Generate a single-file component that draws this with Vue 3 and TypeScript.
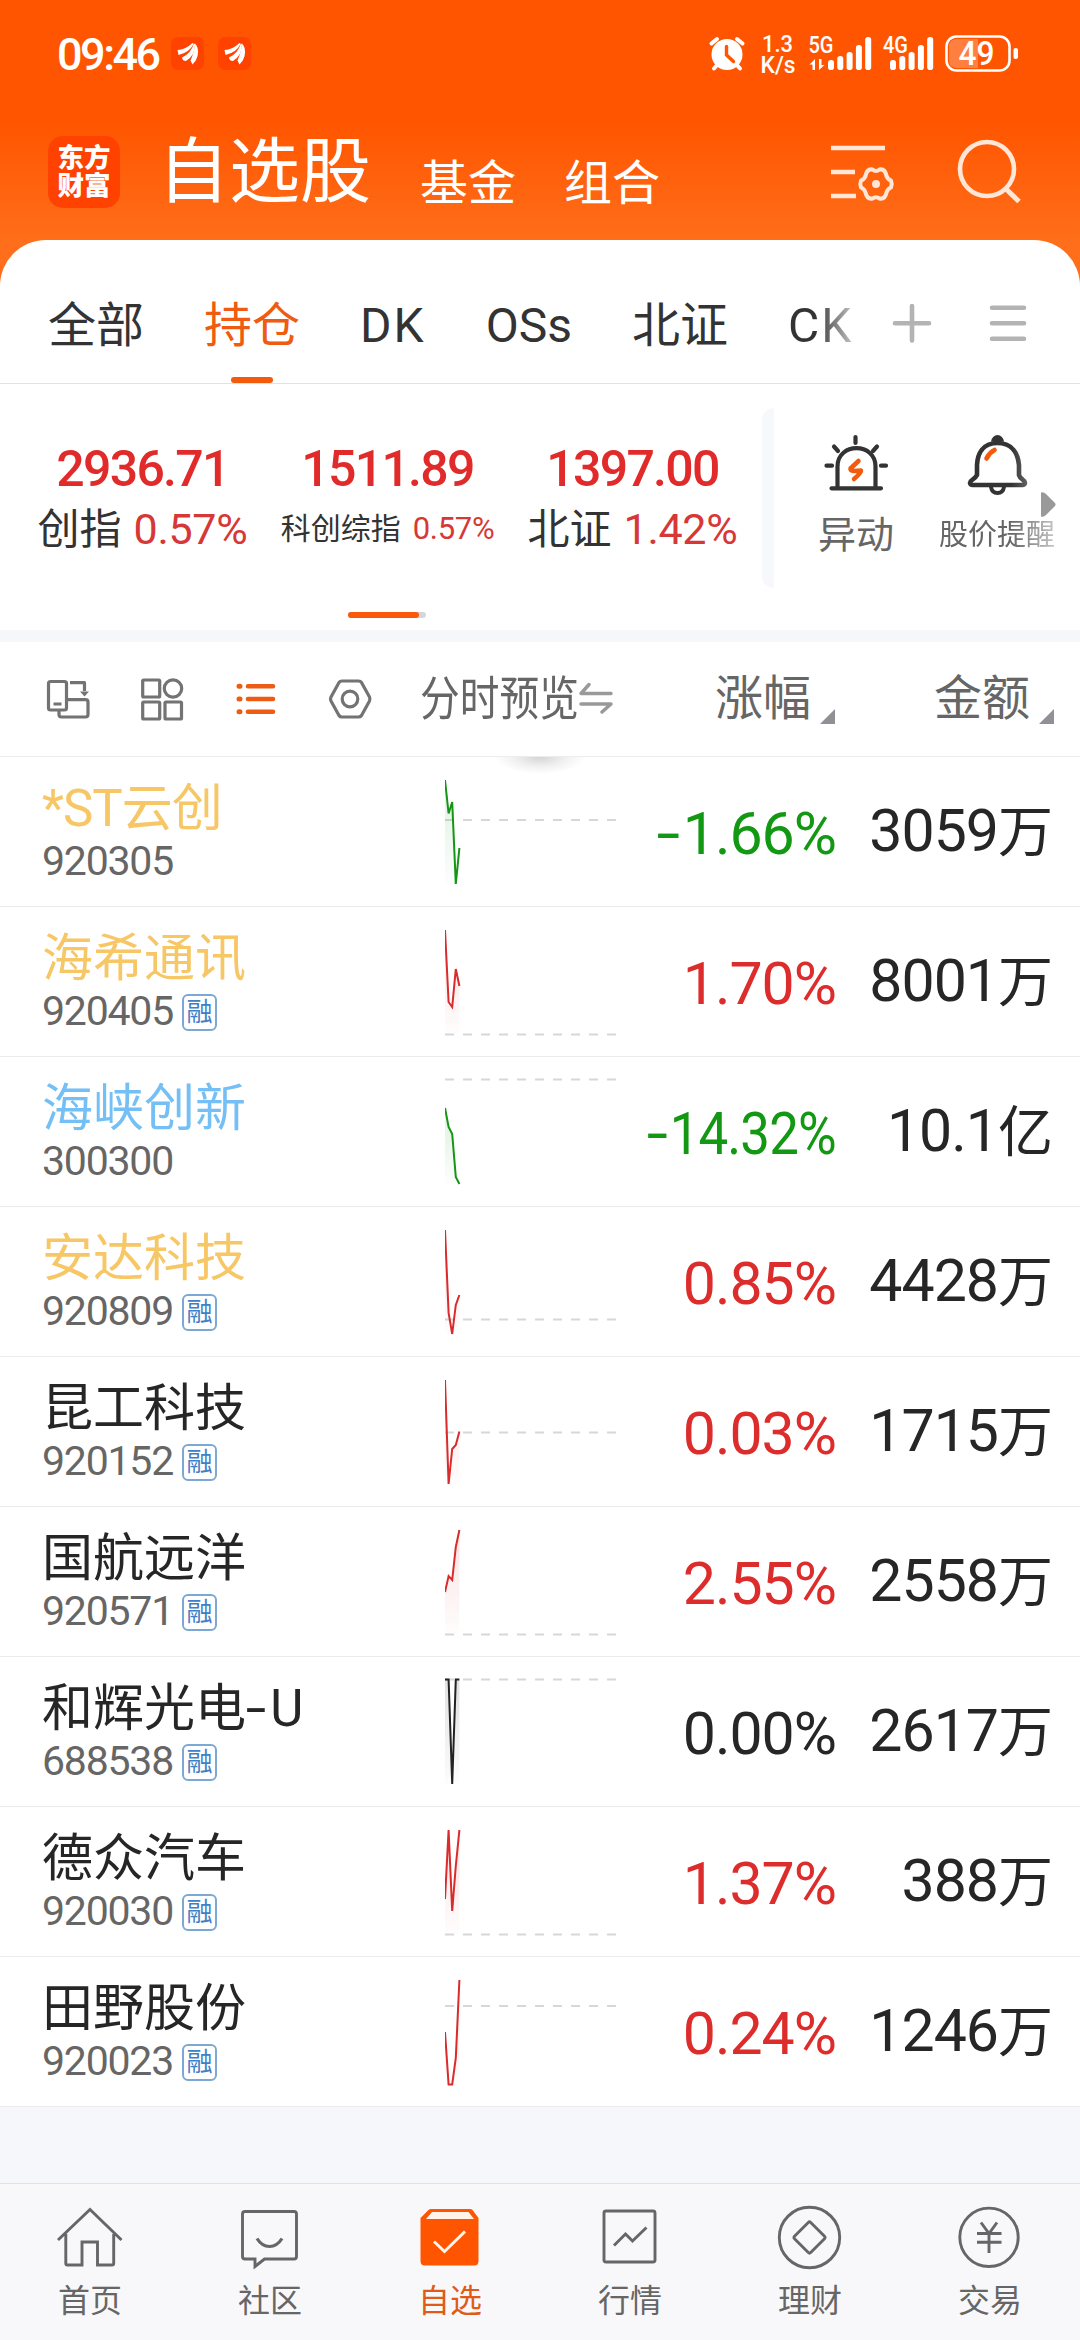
<script setup lang="ts">
type Tone = 'up' | 'down' | 'flat'

interface Stock {
  name: string
  code: string
  margin: boolean
  mark: 'gold' | 'blue' | 'plain'
  change: string
  amount: string
  unit: string
  tone: Tone
  /** y values of the intraday line, one per sample */
  line: number[]
  /** y of the previous close */
  base: number
}

interface MarketIndex {
  value: string
  label: string
  change: string
  small?: boolean
}

const tabs = ['全部', '持仓', 'DK', 'OSs', '北证', 'CK']
const activeTab = '持仓'

const indices: MarketIndex[] = [
  { value: '2936.71', label: '创指', change: '0.57%' },
  { value: '1511.89', label: '科创综指', change: '0.57%', small: true },
  { value: '1397.00', label: '北证', change: '1.42%' },
]

const stocks: Stock[] = [
  { name: '*ST云创', code: '920305', margin: false, mark: 'gold', change: '-1.66%', amount: '3059', unit: '万', tone: 'down', line: [24, 57.5, 46, 128, 92], base: 64 },
  { name: '海希通讯', code: '920405', margin: true, mark: 'gold', change: '1.70%', amount: '8001', unit: '万', tone: 'up', line: [24, 96, 101, 63, 80], base: 128.5 },
  { name: '海峡创新', code: '300300', margin: false, mark: 'blue', change: '-14.32%', amount: '10.1', unit: '亿', tone: 'down', line: [52, 71, 78, 121, 128], base: 23.5 },
  { name: '安达科技', code: '920809', margin: true, mark: 'gold', change: '0.85%', amount: '4428', unit: '万', tone: 'up', line: [24, 107, 128, 99, 89], base: 113.5 },
  { name: '昆工科技', code: '920152', margin: true, mark: 'plain', change: '0.03%', amount: '1715', unit: '万', tone: 'up', line: [24, 128, 93, 89, 75.5], base: 76.5 },
  { name: '国航远洋', code: '920571', margin: true, mark: 'plain', change: '2.55%', amount: '2558', unit: '万', tone: 'up', line: [86, 70, 74, 41, 24], base: 128.5 },
  { name: '和辉光电-U', code: '688538', margin: true, mark: 'plain', change: '0.00%', amount: '2617', unit: '万', tone: 'flat', line: [23.5, 23.5, 128, 23.5, 23.5], base: 23.5 },
  { name: '德众汽车', code: '920030', margin: true, mark: 'plain', change: '1.37%', amount: '388', unit: '万', tone: 'up', line: [93, 24, 105, 60, 24], base: 128.5 },
  { name: '田野股份', code: '920023', margin: true, mark: 'plain', change: '0.24%', amount: '1246', unit: '万', tone: 'up', line: [76, 128.5, 128.5, 102, 24], base: 50 },
]

const colors: Record<Tone, string> = { up: '#d92b2b', down: '#149614', flat: '#222222' }
const bars = [10, 14, 18, 25, 33]

/** Splits a text so that its hyphen can be drawn wider than the font's own. */
function pieces(text: string): string[] {
  return text.split(/(-)/).filter((p) => p !== '')
}

function points(line: number[]): string {
  return line.map((y, i) => `${(i * 3.6).toFixed(1)},${y}`).join(' ')
}

function area(line: number[]): string {
  return `0,128.5 ${points(line)} 14.4,128.5`
}
</script>

<template>
  <div class="app">
    <header class="hero">
      <div class="status">
        <span class="time">09:46</span>
        <svg v-for="n in 2" :key="n" class="mini-logo" viewBox="0 0 33 33">
          <rect width="33" height="33" rx="7" fill="#ff4200" />
          <g fill="#fff">
            <path d="M6.500 13Q14 13 21.500 6L22.500 7Q18.500 15.500 7.500 18Z" />
            <path d="M11 20.500Q20 16.500 22.800 6.500L24 7Q24.500 18 15 24Q11.500 24 11 20.500Z" />
            <path d="M19.500 23.500Q22.500 17 24.500 6.500Q29.500 14.500 24.800 23.500L21.500 27.500Z" />
          </g>
        </svg>
        <svg class="status-icons" viewBox="705 30 320 46">
          <g stroke="#fff" stroke-linecap="round" fill="none">
            <circle cx="727" cy="54.500" r="15.500" fill="#fff" stroke="none" />
            <path d="M711.500 43.500L717 39M742.500 43.500L737 39" stroke-width="4" />
            <path d="M718 64L714 68.500M736 64L740 68.500" stroke-width="4" />
            <path d="M726.500 46.500V55L733.500 61.500" stroke="#ff5500" stroke-width="3.400" />
          </g>
          <g fill="#fff" font-weight="500">
            <text x="762" y="52" font-size="23" textLength="31" lengthAdjust="spacingAndGlyphs">1.3</text>
            <text x="760.500" y="73" font-size="23" textLength="35" lengthAdjust="spacingAndGlyphs">K/s</text>
            <text x="808.500" y="53" font-size="23" textLength="25" lengthAdjust="spacingAndGlyphs">5G</text>
            <text x="883" y="53" font-size="23" textLength="25" lengthAdjust="spacingAndGlyphs">4G</text>
            <path d="M809.500 64.500L815 59V70H812.500V64.500ZM824.500 65L819 70V59H821.500V65Z" />
            <rect v-for="(h, i) in bars" :key="'a' + i" :x="828 + i * 9.300" :y="70 - h" width="6" :height="h" rx="2.800" />
            <rect v-for="(h, i) in bars" :key="'b' + i" :x="890 + i * 9.300" :y="70 - h" width="6" :height="h" rx="2.800" />
            <path d="M957 39H978V68H957Q949 68 949 60V47Q949 39 957 39Z" opacity="0.250" />
            <rect x="946.500" y="36.500" width="63" height="34" rx="10" fill="none" stroke="#fff" stroke-width="2.600" />
            <rect x="1013.500" y="48" width="4.500" height="11" rx="2" />
            <text x="958.500" y="65" font-size="32.500" textLength="36" lengthAdjust="spacingAndGlyphs">49</text>
          </g>
        </svg>
      </div>
      <div class="titlebar">
        <div class="brand"><span>东方</span><span>财富</span></div>
        <h1>自选股</h1>
        <span class="link">基金</span>
        <span class="link">组合</span>
        <svg class="hero-icons" viewBox="825 136 210 80" fill="none" stroke="#ffe6d6" stroke-width="4.600">
          <path d="M831 148H885M831 172H855M831 196H856" />
          <path d="M872.500 169.500Q876 172.500 879.500 169.500Q885 168.500 886.500 176Q887.500 179 891 180.500Q892.500 184 891 187.500Q887.500 189 886.500 192.500Q885 199.500 879.500 198.500Q876 196 872.500 198.500Q867 199.500 865.500 192.500Q864.500 189 861 187.500Q859.500 184 861 180.500Q864.500 179 865.500 176Q867 168.500 872.500 169.500Z" stroke-width="4" stroke-linejoin="round" />
          <circle cx="876" cy="184" r="4" fill="#ffe6d6" stroke="none" />
          <circle cx="987" cy="169" r="27" />
          <path d="M1005.500 188.500L1019 201.500" stroke-width="5" />
        </svg>
      </div>
    </header>

    <main class="sheet">
      <nav class="tabs">
        <div class="tab-list">
          <span v-for="t in tabs" :key="t" class="tab" :class="{ active: t === activeTab, wide: t === 'DK' || t === 'CK', fade: t === 'CK' }">{{ t }}</span>
        </div>
        <svg class="tab-actions" viewBox="885 295 160 56" stroke="#b3b3b3" stroke-width="4.600" stroke-linecap="round">
          <path d="M895 323.300H929M912 306V340.500" />
          <path d="M992 307.700H1024M992 323.300H1024M992 338.800H1024" />
        </svg>
      </nav>

      <section class="overview">
        <div class="indices">
          <div v-for="x in indices" :key="x.label" class="index">
            <strong>{{ x.value }}</strong>
            <div class="index-line" :class="{ small: x.small }">
              <span>{{ x.label }}</span><em>{{ x.change }}</em>
            </div>
          </div>
        </div>
        <div class="divider"></div>
        <div class="tools">
          <div class="tool">
            <svg viewBox="821 432 70 66" fill="none" stroke="#333" stroke-width="4.200" stroke-linecap="round">
              <path d="M837.500 486V466.500C837.500 442 875.500 442 875.500 466.500V486M831.500 488.300H881" />
              <path d="M855.500 437V443M834 446.500L838 451M877 446.500L873 451M826.500 465.700H832M881 465.700H886" />
              <path d="M858.500 461L850.500 468.500Q850 471 853.500 471L861 470.500Q861.500 472.500 854 479" stroke="#f25a0c" stroke-width="4.500" stroke-linejoin="round" />
            </svg>
            <span>异动</span>
          </div>
          <div class="tool narrow">
            <svg viewBox="961.500 432 70 66" fill="none" stroke="#333" stroke-width="4.600" stroke-linejoin="round" stroke-linecap="round">
              <path d="M997 443C982 443 977 454 976.500 465V475C974 480 970 479 969.500 483Q970 485 972 485H1022Q1024 485 1024.500 483C1024 479 1020 480 1018.500 475V465C1017.500 454 1012 443 997 443Z" />
              <path d="M990.500 441.500Q992 435 997 435Q1002 435 1003.500 441.500Z" fill="#333" stroke="none" />
              <path d="M990.500 487Q991.500 493 997 493Q1002.500 493 1003.500 487" stroke-width="4" />
              <path d="M986 458.500Q988.500 453 994 450" stroke="#f25a0c" />
            </svg>
            <span>股价提醒</span>
          </div>
          <svg class="more" viewBox="0 0 15 25"><path d="M0 0.500Q2.500 -0.500 5 2L13.500 10.500Q15.500 12.500 13.500 14.500L5 23Q2.500 25.500 0 24.500Z" fill="#999" /></svg>
        </div>
        <div class="pager"><i></i></div>
      </section>

      <section class="list">
        <div class="list-head">
          <svg class="head-icons" viewBox="40 670 340 58" fill="none" stroke="#737373" stroke-width="3.200" stroke-linejoin="round">
            <rect x="48.500" y="681.500" width="18" height="28.500" rx="2" />
            <path d="M53.500 704H61.500M59 710V714.500Q59 717 61.500 717H85.500Q88 717 88 714.500V702Q88 699.700 85.500 699.700H67M70 682.700H84.500V691" />
            <path d="M80 691.500H89L84.500 696.500Z" fill="#737373" stroke="none" />
            <g>
              <rect x="142.700" y="680" width="17" height="17" rx="1" />
              <circle cx="173" cy="688.500" r="8.700" />
              <rect x="142.700" y="702" width="17" height="17" rx="1" />
              <rect x="165" y="702" width="16.500" height="17" rx="1" />
            </g>
            <g stroke="#ee5c14" stroke-width="4.600" stroke-linecap="round">
              <path d="M248 686.200H273M248 699H273M248 711.800H273" />
              <path d="M239 686.200H240M239 699H240M239 711.800H240" stroke-width="5" />
            </g>
            <path d="M342 681H358.500Q360.500 681 361.500 682.500L369.500 697Q370.300 699 369.500 701L361.500 715.500Q360.500 717 358.500 717H342Q340 717 339 715.500L331 701Q330 699 331 697L339 682.500Q340 681 342 681Z" />
            <circle cx="350" cy="699" r="7.800" />
          </svg>
          <span class="preview">分时预览</span>
          <svg class="swap" viewBox="0 0 36 32" fill="none" stroke="#999" stroke-width="3.400" stroke-linecap="round" stroke-linejoin="round">
            <path d="M33 11.500H3L11 2.500M3 22H33L24 30" />
          </svg>
          <span class="col">涨幅</span>
          <i class="tri"></i>
          <span class="col second">金额</span>
          <i class="tri"></i>
        </div>
        <div class="notch"></div>

        <div v-for="(s, n) in stocks" :key="s.code" class="row">
          <div class="ident">
            <div class="name" :class="[s.mark, { latin: s.name.startsWith('*') }]"><span v-for="(p, i) in pieces(s.name)" :key="i" :class="{ hyphen: p === '-' }">{{ p }}</span></div>
            <div class="code">{{ s.code }}<b v-if="s.margin">融</b></div>
          </div>
          <svg class="chart" viewBox="0 0 175 149">
            <defs>
              <linearGradient :id="'shade' + n" x1="0" y1="0" x2="0" y2="1">
                <stop offset="0" :stop-color="colors[s.tone]" stop-opacity="0.140" />
                <stop offset="1" :stop-color="colors[s.tone]" stop-opacity="0.010" />
              </linearGradient>
            </defs>
            <path :d="`M0 ${s.base}H171`" stroke="#d6d7db" stroke-width="2" stroke-dasharray="9 9" />
            <polygon :points="area(s.line)" :fill="`url(#shade${n})`" />
            <polyline :points="points(s.line)" fill="none" :stroke="colors[s.tone]" stroke-width="2" />
          </svg>
          <div class="change" :class="s.tone">
            <div :class="{ tight: s.change.length > 6 }"><span v-for="(p, i) in pieces(s.change)" :key="i" :class="{ hyphen: p === '-' }">{{ p }}</span></div>
          </div>
          <div class="amount">{{ s.amount }}<span>{{ s.unit }}</span></div>
        </div>
      </section>
    </main>

    <footer class="dock">
      <div class="dock-item">
        <svg viewBox="50 2200 80 72"><path d="M58 2240L90 2209.500L121.500 2240M65.800 2234V2263.500Q65.800 2265 67.500 2265H82V2242H97.500V2265H112Q113.700 2265 113.700 2263.500V2234" /></svg>
        <span>首页</span>
      </div>
      <div class="dock-item">
        <svg viewBox="230 2200 80 72">
          <path d="M245 2211.500H294Q296.500 2211.500 296.500 2214V2256.500Q296.500 2259 294 2259H264.500L255 2266.500V2259H245Q242.500 2259 242.500 2256.500V2214Q242.500 2211.500 245 2211.500Z" />
          <path d="M257 2238.500Q262 2246.500 269.500 2246.500Q277 2246.500 282 2238.500" stroke-width="3.200" />
        </svg>
        <span>社区</span>
      </div>
      <div class="dock-item on">
        <svg viewBox="410 2200 80 72">
          <path d="M431 2209H470Q471.500 2209 472.500 2210L478.500 2218V2261Q478.500 2265.500 474 2265.500H425Q420.500 2265.500 420.500 2261V2218L428.500 2210Q429.500 2209 431 2209Z" fill="#ff5500" stroke="none" />
          <path d="M432 2212H468.500L474 2219H426Z" fill="#fff3ea" stroke="none" />
          <path d="M434 2241.500L444.500 2251.500L465 2231.500" stroke="#fff3ea" stroke-width="3" />
        </svg>
        <span>自选</span>
      </div>
      <div class="dock-item">
        <svg viewBox="590 2200 80 72">
          <rect x="604" y="2211" width="51" height="51" rx="2" />
          <path d="M614 2245.500L625.500 2234L632.500 2241L646.500 2227.500" />
        </svg>
        <span>行情</span>
      </div>
      <div class="dock-item">
        <svg viewBox="770 2200 80 72">
          <circle cx="809.500" cy="2237.500" r="30.200" />
          <path d="M808.300 2222.500Q809.500 2221.300 810.700 2222.500L824.500 2236.300Q825.700 2237.500 824.500 2238.700L810.700 2252.500Q809.500 2253.700 808.300 2252.500L794.500 2238.700Q793.300 2237.500 794.500 2236.300Z" />
        </svg>
        <span>理财</span>
      </div>
      <div class="dock-item">
        <svg viewBox="950 2200 80 72">
          <circle cx="989" cy="2237.300" r="29.200" />
          <path d="M981 2222.500L989 2233.500L997 2222.500M977 2233.500H1001.500M977 2242.300H1001.500M989 2233V2253" />
        </svg>
        <span>交易</span>
      </div>
    </footer>
  </div>
</template>

<style>
body {
  background: #f7f8fa;
}
</style>

<style scoped>
.app {
  width: 1080px;
  height: 2340px;
  display: flex;
  flex-direction: column;
  overflow: hidden;
  background: #f5f7fa;
  color: #333;
  font-family: Roboto, 'Noto Sans CJK SC', sans-serif;
}
svg {
  display: block;
  flex: none;
}
span,
strong {
  white-space: nowrap;
}

.hero {
  height: 300px;
  flex: none;
  background: linear-gradient(#ff5500 120px, #ff6e1a 240px);
  margin-bottom: -60px;
}
.status {
  height: 108px;
  display: flex;
}
.time {
  margin: 29px 0 0 57px;
  width: 114px;
  font-size: 45px;
  line-height: 51px;
  font-weight: 500;
  letter-spacing: -2.500px;
  color: #fff;
}
.mini-logo {
  width: 33px;
  height: 33px;
  margin: 37px 14px 0 0;
}
.status-icons {
  width: 320px;
  height: 46px;
  margin: 30px 0 0 440px;
  overflow: visible;
}
.titlebar {
  display: flex;
  height: 132px;
  color: #fff;
}
.brand {
  width: 72px;
  height: 72px;
  margin: 28px 0 0 48px;
  box-sizing: border-box;
  padding-top: 8px;
  border-radius: 15px;
  background: #ff4200;
  display: flex;
  flex-direction: column;
  align-items: center;
  font-size: 26.500px;
  line-height: 28px;
  font-weight: 900;
}
h1 {
  margin: 19px 0 0 38px;
  width: 262px;
  font-size: 71px;
  line-height: 90px;
  font-weight: 400;
}
.link {
  width: 144px;
  margin-top: 46px;
  font-size: 48px;
  line-height: 60px;
}
.hero-icons {
  width: 210px;
  height: 80px;
  margin: 28px 0 0 117px;
}

.sheet {
  flex: none;
  background: #fff;
  border-radius: 46px 46px 0 0;
  position: relative;
}
.tabs {
  display: flex;
  height: 143px;
  border-bottom: 1px solid #e2e2e2;
}
.tab-list {
  width: 885px;
  box-sizing: border-box;
  padding: 56px 0 0 48px;
  display: flex;
  gap: 60px;
}
.tab {
  font-size: 48px;
  line-height: 60px;
  height: 87px;
  display: flex;
  flex-direction: column;
  align-items: center;
}
.tab.wide {
  letter-spacing: 2px;
}
.tab.active {
  color: #ef5b11;
}
.tab.active::after {
  content: '';
  width: 42px;
  height: 6px;
  border-radius: 3px;
  background: #f25a0c;
  margin-top: 21px;
}
.tab.fade {
  color: transparent;
  background: linear-gradient(90deg, #333 42%, #c4c4c4 100%);
  background-clip: text;
}
.tab-actions {
  width: 160px;
  height: 56px;
  margin-top: 55px;
}

.overview {
  height: 246px;
  display: flex;
  flex-wrap: wrap;
  align-content: flex-start;
  border-bottom: 12px solid #f5f7fa;
}
.indices {
  display: flex;
  width: 742px;
  height: 210px;
  padding-left: 20px;
}
.index {
  width: 245px;
  padding-top: 60px;
  display: flex;
  flex-direction: column;
  align-items: center;
}
.index strong {
  font-size: 50px;
  line-height: 50px;
  font-weight: 500;
  letter-spacing: -1.700px;
  color: #e12b2b;
}
.index-line {
  margin-top: 10px;
  height: 50px;
  display: flex;
  align-items: baseline;
  gap: 12px;
  font-size: 42px;
  line-height: 50px;
}
.index-line em {
  font-style: normal;
  color: #d63838;
  font-size: 43px;
  letter-spacing: -0.300px;
}
.index-line.small {
  font-size: 30px;
}
.index-line.small em {
  font-size: 31px;
}
.divider {
  width: 12px;
  height: 180px;
  margin-top: 24px;
  border-radius: 14px 0 0 14px;
  background: #f7f8fb;
}
.tools {
  display: flex;
  width: 306px;
  height: 210px;
  box-sizing: border-box;
  padding: 48px 0 0 12px;
  position: relative;
}
.tool {
  width: 140px;
  display: flex;
  flex-direction: column;
  align-items: center;
  color: #666;
}
.tool svg {
  width: 70px;
  height: 66px;
}
.tool span {
  margin-top: 12px;
  font-size: 38px;
  line-height: 50px;
}
.tool.narrow {
  width: 142px;
  mask-image: linear-gradient(90deg, #000 60%, rgba(0, 0, 0, 0.350) 92%);
}
.tool.narrow span {
  font-size: 29px;
}
.more {
  position: absolute;
  left: 267px;
  top: 108px;
  width: 15px;
  height: 25px;
}
.pager {
  width: 78px;
  height: 6px;
  margin: 18px 0 0 348px;
  border-radius: 3px;
  background: #d5d6da;
}
.pager i {
  display: block;
  width: 71px;
  height: 6px;
  border-radius: 3px;
  background: #f9590a;
}

.list {
  position: relative;
}
.list-head {
  display: flex;
  height: 114px;
  border-bottom: 1px solid #ececec;
  color: #666;
}
.head-icons {
  width: 340px;
  height: 58px;
  margin: 28px 0 0 40px;
}
.preview {
  width: 158px;
  margin: 27px 0 0 40px;
  font-size: 47px;
  line-height: 60px;
  transform: scaleX(0.845);
  transform-origin: left;
}
.swap {
  width: 36px;
  height: 32px;
  margin: 40px 0 0 0;
}
.col {
  width: 96px;
  margin: 27px 0 0 101px;
  font-size: 48px;
  line-height: 60px;
}
.col.second {
  margin-left: 99px;
}
.tri {
  width: 15px;
  height: 15px;
  margin: 67px 0 0 9px;
  background: #909096;
  clip-path: polygon(100% 0, 100% 100%, 0 100%);
}
.notch {
  position: absolute;
  left: 494px;
  top: 115px;
  width: 92px;
  height: 17px;
  background: radial-gradient(ellipse 50% 100% at 50% 0, rgba(0, 0, 0, 0.170), rgba(0, 0, 0, 0.060) 55%, rgba(0, 0, 0, 0));
}

.row {
  height: 149px;
  display: flex;
  border-bottom: 1px solid #ececec;
}
.ident {
  width: 403px;
  padding: 22px 0 0 42px;
}
.name {
  font-size: 51px;
  line-height: 60px;
  color: #262626;
}
.name.latin {
  letter-spacing: -1px;
}
.name.gold {
  color: #f7c665;
}
.name.blue {
  color: #74bff5;
}
.hyphen {
  display: inline-block;
  transform: scaleX(1.450);
  margin: 0 7px 0 3px;
}
.code {
  margin-top: 2px;
  display: flex;
  font-size: 41px;
  line-height: 40px;
  letter-spacing: -1.200px;
  color: #666;
}
.code b {
  box-sizing: border-box;
  width: 35px;
  height: 37px;
  margin: 3px 0 0 9px;
  border: 2px solid #7ba8d4;
  border-radius: 6px;
  font-size: 26px;
  line-height: 33px;
  font-weight: 400;
  letter-spacing: 0;
  display: flex;
  justify-content: center;
  color: #3f80c6;
}
.chart {
  width: 175px;
  height: 149px;
  margin-top: -1px;
}
.change {
  width: 216px;
  padding-top: 47px;
  font-size: 59px;
  line-height: 60px;
  letter-spacing: -1px;
  white-space: nowrap;
  display: flex;
  justify-content: flex-end;
}
.change .tight {
  transform: scaleX(0.895);
  transform-origin: right;
}
.up {
  color: #dd2c2c;
}
.down {
  color: #139813;
}
.flat {
  color: #262626;
}
.amount {
  width: 217px;
  padding-top: 44px;
  display: flex;
  justify-content: flex-end;
  align-items: baseline;
  height: 60px;
  font-size: 59px;
  line-height: 60px;
  letter-spacing: -1px;
  color: #262626;
}
.amount span {
  font-size: 55px;
  letter-spacing: 0;
}

.dock {
  margin-top: auto;
  height: 156px;
  flex: none;
  display: flex;
  border-top: 1px solid #e3e3e5;
  background: #f8f8fa;
}
.dock-item {
  width: 180px;
  display: flex;
  flex-direction: column;
  align-items: center;
  padding-top: 16px;
  box-sizing: border-box;
  color: #666;
}
.dock-item svg {
  width: 80px;
  height: 72px;
  fill: none;
  stroke: #666;
  stroke-width: 2.900;
}
.dock-item span {
  margin-top: 9px;
  font-size: 32px;
  line-height: 40px;
}
.dock-item.on {
  color: #e05a18;
}
</style>
